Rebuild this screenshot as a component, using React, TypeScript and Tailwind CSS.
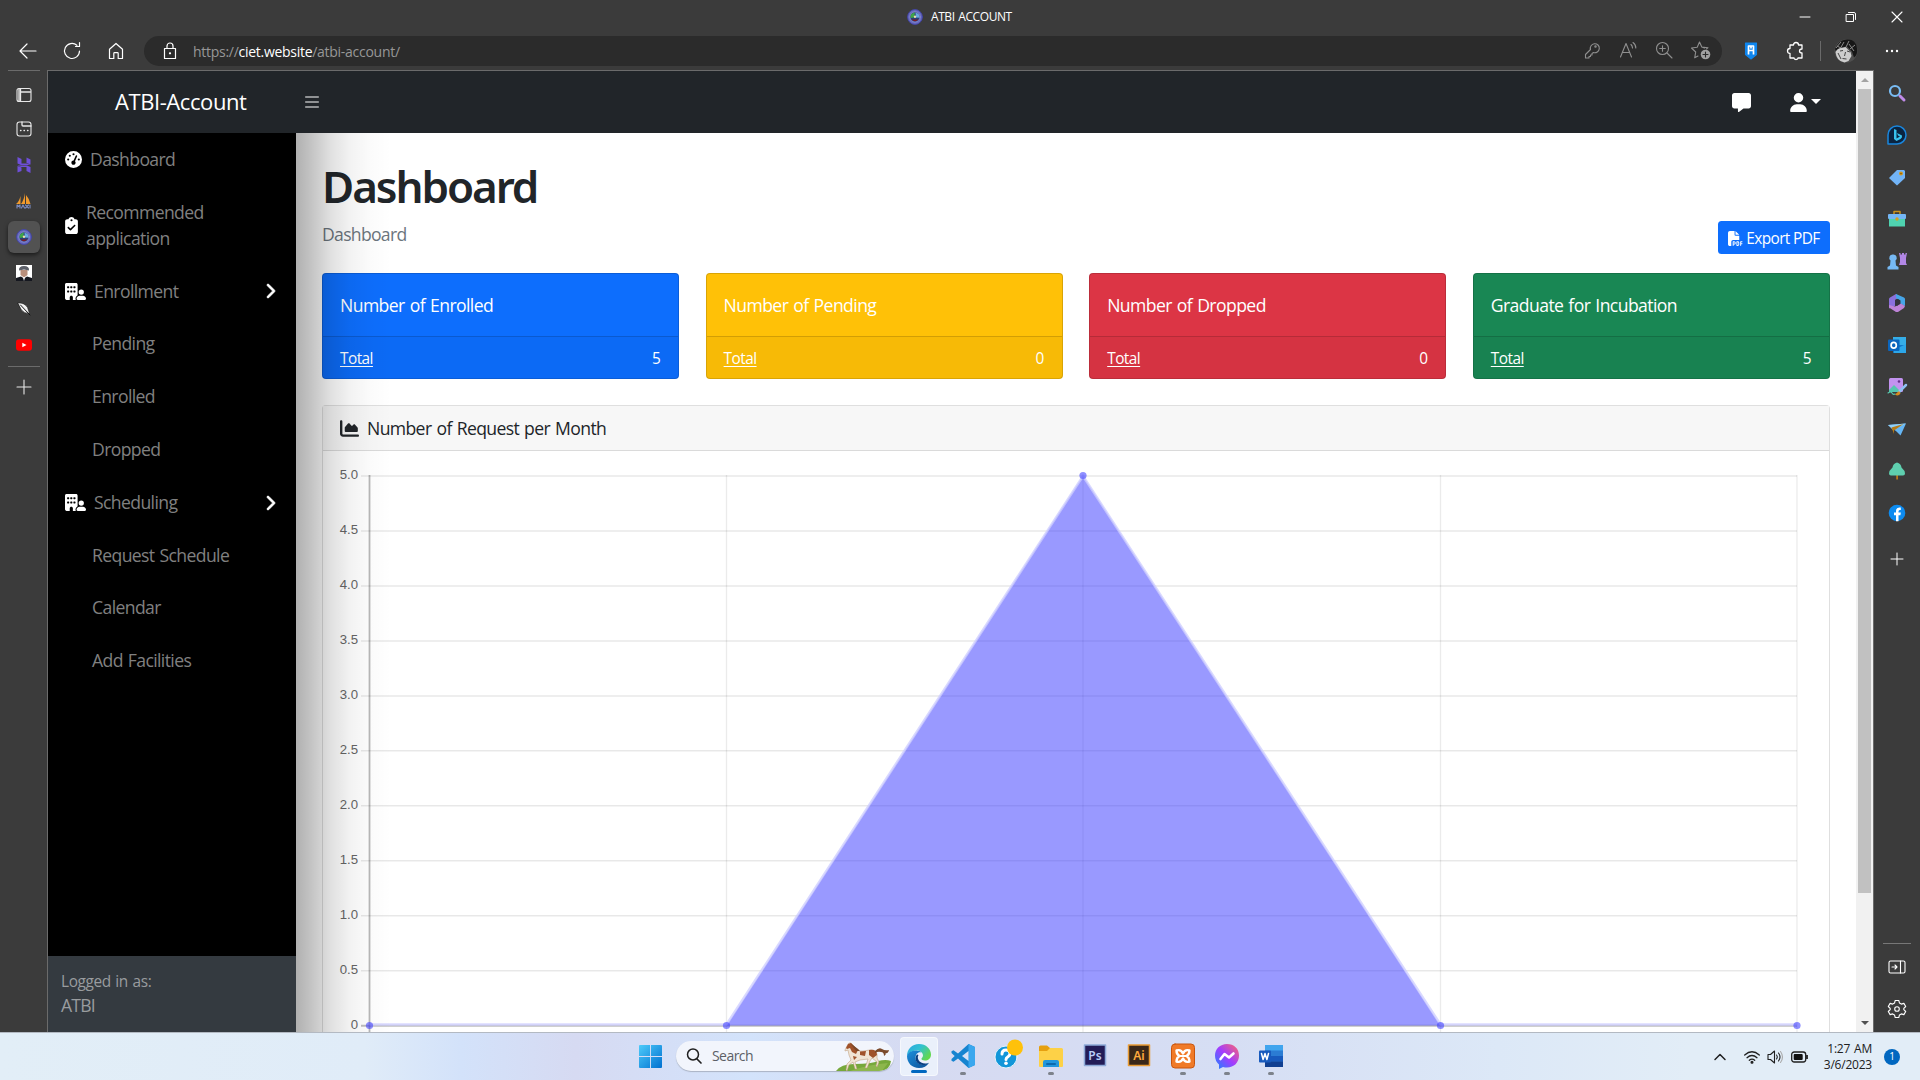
import type { ReactNode } from "react";
import {
  FaGaugeHigh,
  FaClipboardCheck,
  FaBuildingUser,
  FaChevronRight,
  FaChartArea,
  FaFilePdf,
  FaMessage,
  FaUser,
  FaBars,
} from "react-icons/fa6";

type SvgProps = { size?: number; box?: string; className?: string; children: ReactNode };

function Icon({ size = 20, box = "0 0 20 20", className = "", children }: SvgProps) {
  return (
    <svg width={size} height={size} viewBox={box} fill="none" stroke="currentColor" strokeWidth="1.1" strokeLinecap="round" strokeLinejoin="round" className={`block shrink-0 overflow-visible ${className}`}>
      {children}
    </svg>
  );
}

function Seal({ size = 16 }: { size?: number }) {
  return (
    <Icon size={size} box="0 0 16 16">
      <circle cx="8" cy="8" r="7.4" fill="#6b6ec0" stroke="#4244a8" strokeWidth="1" />
      <circle cx="8" cy="8" r="5" fill="#2a3f78" stroke="#9c9fdc" strokeWidth=".600" />
      <path d="M3.600 9A4.600 4.600 0 0 1 8 3.500L7 8.500Z" fill="#3fa648" stroke="none" />
      <path d="M8.500 3.700a4.500 4.500 0 0 1 4 5L9 8.500Z" fill="#6aa8e0" stroke="none" />
      <circle cx="8" cy="7.800" r="1.200" fill="#e7dfb0" stroke="none" />
      <path d="M4.500 10q3.500 1 7 0-3.500 4.500-7 0Z" fill="#7a1c22" stroke="none" />
    </Icon>
  );
}

function TitleBar() {
  return (
    <div className="flex h-[33px] shrink-0 items-center">
      <div className="w-[907px]" />
      <Seal />
      <span className="ml-2 w-[84px] text-[12px] leading-4 tracking-[-0.035em] whitespace-nowrap text-white">ATBI ACCOUNT</span>
      <div className="ml-auto flex w-[138px] text-white">
        {[0, 1, 2].map((i) => (
          <div key={i} className="flex w-[46px] justify-center">
            <Icon size={10} box="0 0 10 10">
              {i === 0 && <path d="M0 5h10" strokeWidth="1" />}
              {i === 1 && <path d="M.5 2.5h7v7h-7zM2.5 .5h5.500q1.500 0 1.500 1.500v5.500" strokeWidth="1" />}
              {i === 2 && <path d="M0 0l10 10M10 0L0 10" strokeWidth="1.1" />}
            </Icon>
          </div>
        ))}
      </div>
    </div>
  );
}

function Toolbar() {
  return (
    <div className="flex h-[37px] shrink-0 items-center pb-px text-white">
      <div className="flex w-[144px] items-center gap-6 pl-[18px]">
        <Icon><path d="M18 10H2.500M9 3l-7 7 7 7" strokeWidth="1.200" /></Icon>
        <Icon><path d="M17.500 10a7.500 7.500 0 1 1-2.600-5.700M17.500 1.500v4h-4" strokeWidth="1.200" /></Icon>
        <Icon><path d="M3.500 8.300 10 2.500l6.500 5.800V17.500h-4.300v-5q0-.8-.8-.8H8.600q-.8 0-.8.8v5H3.500z" strokeWidth="1.200" /></Icon>
      </div>
      <div className="flex h-[30px] w-[1578px] items-center rounded-full bg-[#2b2b2b] pl-4">
        <Icon><path d="M4.500 7.500h11v10h-11zM7 7.500V5a3 3 0 0 1 6 0v2.500" strokeWidth="1.200" /><circle cx="10" cy="12.300" r=".6" fill="white" /></Icon>
        <span className="ml-[13px] text-[14px] tracking-[-0.02em] text-[#979797]">
          https://<span className="text-white">ciet.website</span>/atbi-account/
        </span>
        <div className="mr-[10px] ml-auto flex gap-4 text-[#8f8f8f]">
          <Icon><path d="M8.500 9.500a4.500 4.500 0 1 1 3 3L10 13.500v1.500H8.500v1.500H7v1.500H3.500V14.500z" /><circle cx="13.500" cy="6.500" r=".7" /></Icon>
          <Icon><path d="M2.500 17 8 3.500 13.500 17M4.500 12.500h7M13 4.500q1.500 1.500 1.500 3.500M15 2.500q3 2.200 2.800 5.500" /></Icon>
          <Icon><circle cx="8.500" cy="8.500" r="6" /><path d="m13 13 5 5M8.500 5.700v5.600M5.700 8.500h5.600" /></Icon>
          <Icon size={22} box="0 0 22 22"><path d="m14.500 8-2.700-1-2.300-5-2.300 5.300-5.700.700 4.200 4-1 5.800 3.300-1.800M9.500 2l2.300 5 6.200.700-1.500 1.300" /><circle cx="15.500" cy="14.500" r="4.800" fill="#a0a0a0" stroke="none" /><path d="M15.500 12v5M13 14.500h5" stroke="#2b2b2b" /></Icon>
        </div>
      </div>
      <div className="flex flex-1 items-center pl-[19px]">
        <Icon size={20} box="0 0 20 20"><path d="M4.500 2h11v11.500L10 18l-5.500-4.500z" fill="#0f86ee" stroke="#0f86ee" /><path d="M7.500 13.500V5h5v8.500M10 5v2.500M7.500 9.500h5" strokeWidth="1.700" strokeLinecap="butt" /></Icon>
        <Icon className="ml-[25px]"><path d="M4 4h3.500q0-2.500 2.500-2.500T12.500 4H16v4q-2.500 0-2.500 2T16 12v5h-4q0 1.500-2 1.500T8 17H4v-4.500q-2.500 0-2.500-2.500T4 7.500z" strokeWidth="1.300" /></Icon>
        <div className="ml-[14px] h-5 w-px bg-[#6a6a6a]" />
        <svg viewBox="0 0 24 24" className="ml-[13px] size-6">
          <circle cx="12" cy="12" r="11.500" fill="#4f4f4f" />
          <path d="M1 10Q4 1 13 .5t10 9q1 6-3 9l-2-6-5-5-6 1-4 7Z" fill="#161616" />
          <path d="m2 9 5-6M6 10l4-7m2 5 3-6m1 8 5-4M3 7l4 2m8-4 5 7" stroke="#8b8b8b" />
          <path d="M1.500 13q2-4 6-4l4-1 5 5 1 4-3 5-4 1.500q-8-1-9-10.500Z" fill="#cdcdcd" />
          <path d="m6 12 3-.5m4 .5 3 1m-4.500 0-1 4m-2 2.500 4 .5M4 14l3 6" stroke="#444" fill="none" />
        </svg>
        <svg viewBox="0 0 16 4" className="ml-[26px] h-1 w-4 fill-white"><circle cx="3" cy="2" r="1.200" /><circle cx="8" cy="2" r="1.200" /><circle cx="13" cy="2" r="1.200" /></svg>
      </div>
    </div>
  );
}

function VerticalTabs() {
  return (
    <div className="flex w-[47px] shrink-0 flex-col items-center text-[#e8e8e8]">
      <div className="h-px w-8 bg-[#6b6b6b]" />
      <div className="mt-[7px] flex h-[34px] items-center"><Icon size={16} box="1 1 16 16"><rect x="2" y="2.500" width="14" height="13" rx="2" /><path d="M5.500 6h10M5.500 3v12M4 3v12" strokeWidth="1.300" /></Icon></div>
      <div className="flex h-[34px] items-center"><Icon size={16} box="1 1 16 16"><rect x="2" y="2" width="14" height="14" rx="2.500" /><path d="M7 2v3q0 1 1 1h8M5.500 10.500h.5M9 10.500h.5M12.500 10.500h.5" strokeWidth="1.300" /></Icon></div>
      <div className="mt-px flex h-9 items-center"><Icon size={16} box="0 0 16 16"><path d="M1.500 0 5.500 2v4.500h5L14.500 8H5L1.500 6.500zM10.500.5l4 2V7.500l-4-1.500zM14.500 16l-4-2v-4H5L1.500 8.500H11l3.500 1.500zM5.500 10.500V14l-4 1.500V9z" fill="#6f4fd8" stroke="none" /></Icon></div>
      <div className="flex h-9 items-center"><Icon size={16} box="0 0 16 16"><path d="M0 11q3-2 4.500-8v8zM5 11q3-4 4-11v11zM10 11V2q3.500 4 4.500 9z" fill="#f19a2c" stroke="none" /><path d="M1 15v-3l1.500 1.500L4 12v3m1.500 0L7 12l1.500 3m1-3 3 3m0-3-3 3m4.500-3v3" stroke="#7f8fc4" /></Icon></div>
      <div className="my-0.5 flex h-8 w-8 items-center justify-center rounded-md bg-[#525252] shadow-[0_2px_4px_rgba(0,0,0,0.55)]"><Seal /></div>
      <div className="flex h-9 items-center"><Icon size={16} box="0 0 16 16"><path d="M0 0h16v16H0z" fill="#fff" stroke="none" /><path d="M4.500 5h7v5L8 12.500 4.500 10z" fill="#b88f7c" stroke="none" /><path d="M3 5.500Q2.500 1 8 1t5 4.500L8 4.500z" fill="#5c5f68" stroke="none" /><path d="M0 16v-3l5-1.500 3 2 3-2 5 1.500v3z" fill="#15171f" stroke="none" /><path d="m7 12.500 1 3.500 1-3.500z" fill="#fff" stroke="none" /></Icon></div>
      <div className="flex h-9 items-center"><Icon size={16} box="0 0 16 16"><path d="M2 2q6.500-.500 9.500 4.500l2 6Q8 12.500 5.500 9z" fill="#f2f2f2" stroke="#111" strokeWidth=".500" /><path d="m4.500 4 9.500 10" stroke="#111" strokeWidth="1" /></Icon></div>
      <div className="flex h-9 items-center"><Icon size={16} box="0 0 16 16"><rect y="2.300" width="16" height="11.400" rx="3" fill="#f00" stroke="none" /><path d="m6.300 5.700 4.200 2.300-4.200 2.300z" fill="#fff" stroke="none" /></Icon></div>
      <div className="mt-[3px] h-px w-8 bg-[#6b6b6b]" />
      <div className="mt-[12px]"><Icon size={16} box="0 0 16 16"><path d="M8 1v14M1 8h14" /></Icon></div>
    </div>
  );
}

function EdgeSidebar() {
  const items: ReactNode[] = [
    <><circle cx="8" cy="8" r="5" stroke="#79bdf5" strokeWidth="2.200" /><path d="m13 13 4 4" stroke="#c08be8" strokeWidth="3" /></>,
    <><path d="M1 19V10a9 9 0 1 1 9 9z" fill="#0b2440" stroke="#1a86dd" strokeWidth="1.500" /><path d="m7 4 2.500 1v8.500l3.500-2-2-1-1-2.500 5 2.500q.500 2-1.500 3.500l-4 2L7 14z" fill="#38c3ee" stroke="none" /></>,
    <><path d="m2 11 8-8h7l1 1v7l-8 7.500z" fill="#72b4f7" stroke="none" /><circle cx="14" cy="6.500" r="1.400" fill="#8d5a00" stroke="#d79a1b" /></>,
    <><path d="M7 5V2.500h6V5" stroke="#c9921c" strokeWidth="1.500" /><rect x="1" y="5" width="18" height="5" rx="1" fill="#74b6f5" stroke="none" /><path d="M2 10h16v7.500H2z" fill="#4fd3b0" stroke="none" /><circle cx="10" cy="10" r="1.700" fill="#d3a020" stroke="none" /></>,
    <><path d="M12 2h1.500v1.500H15V2h2v1.500h1.500V2H20l-1 5v5l1 2h-8l1-3V7z" fill="#b287e6" stroke="none" /><path d="M6 3.500a3.400 3.400 0 0 1 2.500 6L9 14.500l2.500 1.500v2.500H.500V16L3 14.500l.500-5A3.400 3.400 0 0 1 6 3.500" fill="#76b9f4" stroke="none" /></>,
    <><path d="M2 6q0-1 1-1.500L9 1l4 3-5 3v6l-6 2.500z" fill="#8a70dc" stroke="none" /><path d="m9 1 8 3.500q1 .500 1 1.500V13l-5-2.500V7.500L9 5z" fill="#46a5e8" stroke="none" /><path d="M2 14.500V12l6 1.500 6-3 4 2.500-1 2-6 4H9z" fill="#bd83d6" stroke="none" /><path d="m8 7 3-1 2.500 1.500v3L10 13l-2-1z" fill="#34343c" stroke="none" /></>,
    <><path d="M6 2h13v8H6z" fill="#35aee8" stroke="none" /><path d="M6 10h13v8H6z" fill="#1277c9" stroke="none" /><path d="m7 15 12-6v9H7z" fill="#2ca7e9" stroke="none" /><rect x="1" y="4.500" width="11.500" height="11.500" rx="1" fill="#0b65bd" stroke="none" /><ellipse cx="6.700" cy="10.200" rx="2.600" ry="2.900" stroke="#fff" strokeWidth="1.700" /></>,
    <><rect x="2" y="1" width="14" height="14" rx="1.500" fill="#c292ef" stroke="none" /><path d="m2 13 5-5 5 5v2H2z" fill="#54c6ae" stroke="none" /><circle cx="12" cy="4.500" r="1.300" fill="#64308a" stroke="none" /><path d="m19 8-7 7" stroke="#8fc1f5" strokeWidth="2.500" /><path d="m12 14-4 3.500q3 2.500 5.500-1z" fill="#d98a1d" stroke="none" /><path d="M1 16q3-2 4 0t3 1" stroke="#59cbb0" /></>,
    <><path d="M1 6 19 4.500l-5.500 12-4-4z" fill="#65b6f5" stroke="none" /><path d="m1 6 18-1.500L6 11z" fill="#8fd0f9" stroke="none" /><path d="m4.500 8.500 12-3.500L7 11.500V15z" fill="#b57a17" stroke="none" /></>,
    <><path d="M9.200 13h1.800v5.500H9.200z" fill="#b8791a" stroke="none" /><path d="M10 1.500q4 1 4.500 5 3.500 3 3.500 6 0 2-2 2H4q-2 0-2-2 0-3 3.500-6 .500-4 4.500-5" fill="#5fcfaf" stroke="none" /></>,
    <><circle cx="10" cy="10" r="8.300" fill="#0d8bf0" stroke="none" /><path d="M9 18.200v-6H7V9.500h2V8q0-3.500 3.200-3.500h1.600V7h-1q-1.300 0-1.300 1.500v1h2.400l-.500 2.700h-1.900v6z" fill="#fff" stroke="none" /></>,
  ];
  return (
    <div className="flex flex-1 flex-col items-center text-white">
      <div className="h-0.5" />
      {items.map((d, i) => (
        <div key={i} className="flex h-[42px] items-center"><Icon>{d}</Icon></div>
      ))}
      <div className="mt-[17px]"><Icon size={16} box="0 0 16 16"><path d="M8 2v12M2 8h12" strokeWidth="1" /></Icon></div>
      <div className="mt-auto h-px w-7 bg-[#777]" />
      <div className="mt-[14px]"><Icon size={18} box="0 0 18 18"><rect x="1" y="3" width="16" height="12" rx="1.500" /><path d="M12.500 3v12M4 9h5M7 7l2 2-2 2" /></Icon></div>
      <div className="mt-[23px] mb-[13px]"><Icon size={20}><path d="m8.200 1.500h3.600l.7 2.600 1.800 1 2.600-.7 1.800 3.100-1.900 1.900v1.200l1.900 1.900-1.800 3.100-2.600-.7-1.800 1-.7 2.600H8.200l-.7-2.600-1.800-1-2.600.7-1.800-3.100 1.900-1.900V9.400L1.300 7.500l1.800-3.100 2.600.7 1.800-1z" /><circle cx="10" cy="10" r="2.300" /></Icon></div>
    </div>
  );
}

function SideNav() {
  const sub = "flex h-[52.8px] items-center pb-0.5 pl-11";
  const group = "flex h-[52.8px] items-center pr-[18px] pl-[17px]";
  return (
    <nav className="flex w-[248px] shrink-0 flex-col bg-black text-[17.6px] leading-[26.4px] tracking-[-0.035em] text-[#808080]">
      <div className="flex h-[52.8px] items-center pl-[17px]"><FaGaugeHigh className="mr-2 size-[17px] text-white" />Dashboard</div>
      <div className="flex h-[79.2px] items-center pl-[17px]"><FaClipboardCheck className="mr-2 h-[17px] w-[13px] text-white" /><span>Recommended<br />application</span></div>
      <div className={group}><FaBuildingUser className="mr-2 h-[17px] w-[21px] text-white" />Enrollment<FaChevronRight className="ml-auto size-4 text-white" strokeWidth="24" stroke="white" /></div>
      <div className={sub}>Pending</div>
      <div className={sub}>Enrolled</div>
      <div className={sub}>Dropped</div>
      <div className={group}><FaBuildingUser className="mr-2 h-[17px] w-[21px] text-white" />Scheduling<FaChevronRight className="ml-auto size-4 text-white" strokeWidth="24" stroke="white" /></div>
      <div className="flex h-[52.8px] items-center pb-px pl-11">Request Schedule</div>
      <div className={sub}>Calendar</div>
      <div className={sub}>Add Facilities</div>
      <div className="mt-auto h-[76px] bg-[#343a40] px-[13px] pt-[14px] text-[#999c9f]">
        <div className="text-[15.4px] leading-[23px] tracking-[-0.025em]">Logged in as:</div>
        <div className="leading-6 tracking-[-0.045em]">ATBI</div>
      </div>
    </nav>
  );
}

const cards = [
  { title: "Number of Enrolled", total: 5, bg: "bg-[#0d6efd]" },
  { title: "Number of Pending", total: 0, bg: "bg-[#ffc107]" },
  { title: "Number of Dropped", total: 0, bg: "bg-[#dc3545]" },
  { title: "Graduate for Incubation", total: 5, bg: "bg-[#198754]" },
];

const months = [46.5, 403.5, 760, 1117.5, 1474];
const steps = ["5.0", "4.5", "4.0", "3.5", "3.0", "2.5", "2.0", "1.5", "1.0", "0.5", "0"];

function AreaChart() {
  return (
    <svg width="1505" height="581" className="block">
      {months.map((x, i) => (
        <line key={x} x1={x} x2={x} y1="24" y2="581" stroke="black" strokeOpacity={i ? 0.08 : 0.28} strokeWidth={i ? 1.3 : 1.8} />
      ))}
      {steps.map((s, i) => (
        <g key={s}>
          <line x1="38" x2="1474" y1={25 + i * 54.97} y2={25 + i * 54.97} stroke="black" strokeOpacity={i === 10 ? 0.25 : 0.09} strokeWidth={i === 10 ? 2 : 1.5} />
          <text x="35" y={28 + i * 54.97} textAnchor="end" className="fill-[#666] font-['Liberation_Sans'] text-[13.2px]">{s}</text>
        </g>
      ))}
      <path d="M403.500 574.500 760 25l357.500 549.500z" fill="#3333ff" fillOpacity=".5" />
      <path d="M46.500 573.500h357L760 25l357.500 548.500h356.500" fill="none" stroke="#ccccff" strokeOpacity=".75" strokeWidth="2.400" />
      {months.map((x, i) => (
        <circle key={x} cx={x} cy={i === 2 ? 24.500 : 574.5} r="3.6" fill="#4444ff" fillOpacity=".6" />
      ))}
    </svg>
  );
}

function Dashboard() {
  return (
    <main className="relative min-w-0 flex-1 overflow-hidden bg-white px-[26px] pt-[26px] text-[#212529]">
      <h1 className="mt-px font-['Noto_Sans'] text-[44px] leading-[53px] font-semibold tracking-[-0.047em]">Dashboard</h1>
      <div className="mt-[8px] mb-[26px] flex h-[26px] justify-between">
        <div className="text-[17.6px] leading-[26px] tracking-[-0.04em] text-[#6c757d]">Dashboard</div>
        <button className="flex h-[33px] w-[112px] items-center justify-center gap-[3px] rounded-[3.500px] bg-[#0d6efd] pt-0.5 text-[15.4px] tracking-[-0.04em] whitespace-nowrap text-white">
          <FaFilePdf className="size-[15px]" />Export PDF
        </button>
      </div>
      <div className="mb-[26px] grid grid-cols-4 gap-[26.4px]">
        {cards.map((c) => (
          <div key={c.title} className={`rounded border border-black/15 text-white ${c.bg}`}>
            <div className="flex h-[62px] items-center px-[17px] text-[17.6px] tracking-[-0.033em]">{c.title}</div>
            <div className="flex h-[42px] items-center justify-between border-t border-black/15 bg-black/[0.03] pt-0.5 pr-[18px] pl-[17px] text-[15.4px] tracking-[-0.035em]">
              <span className="underline underline-offset-2">Total</span>
              <span>{c.total}</span>
            </div>
          </div>
        ))}
      </div>
      <section className="rounded-t border border-b-0 border-[#dfdfdf]">
        <div className="flex h-[45px] items-center border-b border-[#dadada] bg-[#f7f7f7] px-[17px] text-[17.6px] tracking-[-0.035em]">
          <FaChartArea className="mr-2 size-[19px]" />Number of Request per Month
        </div>
        <AreaChart />
      </section>
      <div className="absolute inset-y-0 left-0 w-[96px] bg-[linear-gradient(90deg,rgba(0,0,0,.31),rgba(0,0,0,.23)_16%,rgba(0,0,0,.12)_36%,rgba(0,0,0,.05)_56%,rgba(0,0,0,.015)_78%,transparent)]" />
    </main>
  );
}

function WebPage() {
  return (
    <div className="flex w-[1827px] shrink-0 border-x border-t border-[#6b6b6b]">
      <div className="flex min-w-0 flex-1 flex-col">
        <header className="flex h-[62px] shrink-0 items-center bg-[#212529] text-white">
          <div className="w-[248px] pb-px pl-[67px] text-[22px] tracking-[-0.019em]">ATBI-Account</div>
          <FaBars className="ml-2 size-4 text-[#909294]" />
          <FaMessage className="ml-auto size-[19px]" />
          <FaUser className="ml-[39px] h-[19px] w-[17px]" />
          <svg viewBox="0 0 10 5" className="mr-[35px] mb-px ml-1 h-[5px] w-[10px] fill-white"><path d="M0 0h10L5 5z" /></svg>
        </header>
        <div className="flex min-h-0 flex-1">
          <SideNav />
          <Dashboard />
        </div>
      </div>
      <div className="flex w-[17px] shrink-0 flex-col items-center justify-between bg-[#f1f1f1]">
        <svg viewBox="0 0 8 4" className="my-[7px] h-1 w-2 fill-[#a3a3a3]"><path d="M0 4h8L4 0z" /></svg>
        <div className="mb-auto h-[804px] w-[13px] bg-[#c1c1c1]" />
        <svg viewBox="0 0 8 4" className="my-[7px] h-1 w-2 fill-[#505050]"><path d="M0 0h8L4 4z" /></svg>
      </div>
    </div>
  );
}

function Horse() {
  return (
    <svg viewBox="0 0 56 30" className="h-[30px] w-[56px]">
      <path d="M0 30q5-7 18-7 18 0 24-3 8-2 13 0-1 10-12 10z" fill="#76a83b" />
      <path d="M14 30q16-6 38-8l-6 8z" fill="#9cbf5a" opacity=".6" />
      <path d="m9 9 2-4 2-3 2 0 6 6q2 3 6 2 5-1 10-1 5 1 4 8l2 4-2 5-1-1 1-4-5-4-2 3-3 7-2 0 3-9-8 1-5 2 2 7-2 0-2-7-4 3-2 6-1-1 1-6 4-4-2-5-1-5-3 1z" fill="#f0e4d4" stroke="#b89572" strokeWidth=".500" />
      <path d="m12 3 3-1 7 7-2 4-4-2-2-4-3 1-1-1zM24 10.500l6-.500-1 5-5-1zM33 9q8-1 8 5l-4 3-4-3zM17 15l4 1-3 3z" fill="#a0522a" />
      <path d="M39 10q4-4 7-2 3 2 7 1-1 4-4 3 2 1-1 3 0-4-3-4-3-1-6 1z" fill="#7b4a2b" />
      <path d="m14 2 8 6 2 2-4 0z" fill="#7b4a2b" />
    </svg>
  );
}

function Taskbar() {
  const apps: { art: ReactNode; dot?: boolean }[] = [
    { dot: true, art: <><path d="M17.500 0 7 9.500 2.500 6.300.500 7.200V9l3.200 3L.500 15v1.800l2 .900L7 14.500 17.500 24l6.500-3V3z" fill="#1684d0" stroke="none" /><path d="m17.500 0 6.500 3v18l-6.500 3z" fill="#3aa7ee" stroke="none" /><path d="M17.500 7v10l-6.500-5z" fill="#d8e2f6" stroke="none" /></> },
    { art: <><circle cx="11" cy="13" r="11" fill="#1296d9" stroke="#e8f4fb" strokeWidth="1" /><path d="M7 10q0-4 4-4t4 3.500q0 2-2 3.200t-2 2.800" stroke="#fff" strokeWidth="3" /><circle cx="11" cy="19.300" r="1.800" fill="#fff" stroke="none" /><circle cx="20" cy="3.500" r="8" fill="#ffc10a" stroke="none" /></> },
    { dot: true, art: <><path d="M0 3q0-1.500 1.500-1.500H8L11 4v3H0z" fill="#e6a010" stroke="none" /><path d="M0 7h8l3-3h11.500Q24 4 24 5.500V22q0 1-1 1H1q-1 0-1-1z" fill="#fdd147" stroke="none" /><path d="M4 23v-5q0-2 2-2h12q2 0 2 2v5z" fill="#2296dc" stroke="none" /><path d="M8 20h8" stroke="#0c69ad" strokeWidth="2" /></> },
    { art: <><rect x="1.500" y="1" width="21" height="20.500" fill="#231c57" stroke="#8da9d8" strokeWidth="1.500" /><text x="12" y="15.500" textAnchor="middle" stroke="none" className="fill-[#b9cdf8] font-['Noto_Sans'] text-[12px] font-semibold">Ps</text></> },
    { art: <><rect x="1.500" y="1" width="21" height="20.500" fill="#3a2718" stroke="#e89b35" strokeWidth="1.500" /><text x="12" y="15.500" textAnchor="middle" stroke="none" className="fill-[#ffab3d] font-['Noto_Sans'] text-[12px] font-semibold">Ai</text></> },
    { dot: true, art: <><rect x=".500" y="0" width="23" height="24" rx="3.500" fill="#f07a28" stroke="#c9550d" strokeWidth="1" /><path d="M5.500 6.500q4.500-1.500 6.500 3 2-4.500 6.500-3 0 4-3 5.500 3 1.500 3 5.500-4.500 1.500-6.500-3-2 4.500-6.500 3 0-4 3-5.500-3-1.500-3-5.500z" stroke="#fff" strokeWidth="2.400" /><path d="M8.500 12h7" stroke="#fff" strokeWidth="2" /></> },
    { dot: true, art: <><defs><linearGradient id="msg" x1="0" y1="1" x2="1" y2="0"><stop stopColor="#1687ff" /><stop offset=".5" stopColor="#a33cff" /><stop offset="1" stopColor="#ff6968" /></linearGradient></defs><path d="M12 0C5 0 0 5 0 11.500q0 5.500 4 9V25l4-2q2 .500 4 .500c7 0 12-5 12-12S19 0 12 0z" fill="url(#msg)" stroke="none" /><path d="m5.500 15 4-5 4.500 3.500 4.500-4" stroke="#fff" strokeWidth="2.600" /></> },
    { dot: true, art: <><rect x="6" y="1" width="18" height="22" rx="1" fill="#2b7cd3" stroke="none" /><path d="M6 1h18v5.500H6z" fill="#41a5ee" stroke="none" /><path d="M6 12h18v5.500H6z" fill="#185abd" stroke="none" /><path d="M6 17.500h18V23H6z" fill="#103f91" stroke="none" /><rect x="0" y="6.500" width="12" height="12" rx="1" fill="#185abd" stroke="none" /><path d="m2.500 9.500 1.600 6 1.900-6 1.900 6 1.600-6" stroke="#fff" strokeWidth="1.500" /></> },
  ];
  return (
    <div className="flex h-12 shrink-0 border-t border-[#b3b9c2] bg-[linear-gradient(90deg,#e2eef7_0%,#e0ecf8_19%,#d3e2fa_24%,#d6daf2_30%,#d3e3fb_39%,#d6daf1_48%,#d6def4_64%,#dce8f7_78%,#e2edf7_88%)] text-[#202020]">
      <div className="w-[639px]" />
      <svg viewBox="0 0 24 24" className="mt-[12px] size-[23px]">
        <defs><linearGradient id="win" x1="0" y1="0" x2="1" y2="1"><stop stopColor="#4dcbfa" /><stop offset="1" stopColor="#0070d0" /></linearGradient></defs>
        <path d="M0 1q0-1 1-1h10.500v11.500H0zM12.500 0H23q1 0 1 1v10.500H12.500zM0 12.500h11.500V24H1q-1 0-1-1zM12.500 12.500H24V23q0 1-1 1H12.500z" fill="url(#win)" />
      </svg>
      <div className="mt-2 ml-[14px] flex h-[30px] w-[218px] items-center overflow-hidden rounded-full bg-[#f2f5fc] pl-[10px] shadow-[0_1px_1px_#aab3c4]">
        <Icon size={16} box="0 0 16 16"><circle cx="7" cy="6.500" r="5.500" strokeWidth="1.500" /><path d="m11 11 4 4" strokeWidth="1.700" /></Icon>
        <span className="ml-[10px] text-[14px] leading-5 tracking-[-0.04em] text-[#5c5f66]">Search</span>
        <div className="mr-0.5 ml-auto"><Horse /></div>
      </div>
      <div className="mt-1 ml-[6px] flex h-[39px] w-[38px] flex-col items-center rounded border border-white/50 bg-[#eaf0fb]">
        <Icon size={24} box="0 0 24 24" className="mt-1.5">
          <defs><linearGradient id="edgeTop" x1="0" y1="0" x2="1" y2=".6"><stop stopColor="#2ba4e0" /><stop offset=".5" stopColor="#31c1d2" /><stop offset="1" stopColor="#62d84e" /></linearGradient><linearGradient id="edgeLow" x1="0" y1="0" x2="1" y2="1"><stop stopColor="#1c8fdc" /><stop offset="1" stopColor="#0c4f96" /></linearGradient></defs>
          <path d="M0 12C0 5 5 0 12 0s12 5 12 10.500c0 4-3 6-6 6-2.500 0-4-1-3.500-2 1-1 1.500-2 1.500-3C16 8.500 13 6.500 9.500 6.500 5 6.500 1 9 0 12z" fill="url(#edgeTop)" stroke="none" />
          <path d="M0 12c1-4 5-5.500 9.500-5.500 2 0 4 .800 5 2C11 7.500 8.500 10 8.500 14c0 4 4 7 8.500 6.500 2-.300 4-1 5-1.800C20 22 16.500 24 12 24 5 24 0 19 0 12z" fill="url(#edgeLow)" stroke="none" />
          <path d="M10 10.500c-2 2-2 5.500 0 8 3 3 8 3.500 12 .2-4 2-9 .3-10.500-2.700-1-2-.800-4 0-5z" fill="#0a3f80" stroke="none" />
        </Icon>
        <div className="mt-auto mb-0.5 h-[3px] w-4 rounded-full bg-[#0067c0]" />
      </div>
      <div className="ml-[3px] flex">
        {apps.map((a, i) => (
          <div key={i} className="flex w-11 flex-col items-center">
            <Icon size={24} box="0 0 24 24" className="mt-[11px]">{a.art}</Icon>
            {a.dot && <div className="mt-[4px] h-[3px] w-1.5 rounded-full bg-[#7d828b]" />}
          </div>
        ))}
      </div>
      <div className="ml-auto flex h-[47px] w-[206px] items-center">
        <Icon size={12} box="0 0 12 12"><path d="m1 8.500 5-5 5 5" strokeWidth="1.500" /></Icon>
        <Icon size={16} box="0 0 16 16" className="ml-[18px]"><path d="M.700 6q7.300-6.500 14.600 0M3 8.700q5-4.300 10 0M5.300 11.300q2.700-2.300 5.400 0" strokeWidth="1.300" /><circle cx="8" cy="13.200" r="1" fill="#202020" /></Icon>
        <Icon size={16} box="0 0 16 16" className="ml-[7px]"><path d="M1 5.500h2.500L7.500 2v12l-4-3.500H1zM9.500 6q1.500 2 0 4M11.500 4q3 4 0 8" /><path d="M13.500 2.500q4 5.500 0 11" stroke="#aaa" /></Icon>
        <svg viewBox="0 0 17 12" className="ml-2 h-3 w-[17px] overflow-visible"><rect x=".700" y="1" width="14" height="10" rx="2.500" fill="none" stroke="#202020" strokeWidth="1.300" /><rect x="2.700" y="3" width="9" height="6" rx="1" fill="#111" /><path d="M16 4v4" stroke="#202020" strokeWidth="1.800" /></svg>
        <div className="w-[64px] text-right text-[12px] leading-4 tracking-[-0.018em] whitespace-nowrap">1:27 AM<br />3/6/2023</div>
        <div className="ml-3 flex size-4 items-center justify-center rounded-full bg-[#0067c0] text-[10px] text-white">1</div>
      </div>
    </div>
  );
}

export default function App() {
  return (
    <div className="flex h-[1080px] w-[1920px] flex-col overflow-hidden bg-[#3b3b3b] font-['Open_Sans','Noto_Sans',sans-serif] [word-spacing:1px]">
      <TitleBar />
      <Toolbar />
      <div className="flex min-h-0 flex-1">
        <VerticalTabs />
        <WebPage />
        <EdgeSidebar />
      </div>
      <Taskbar />
    </div>
  );
}
